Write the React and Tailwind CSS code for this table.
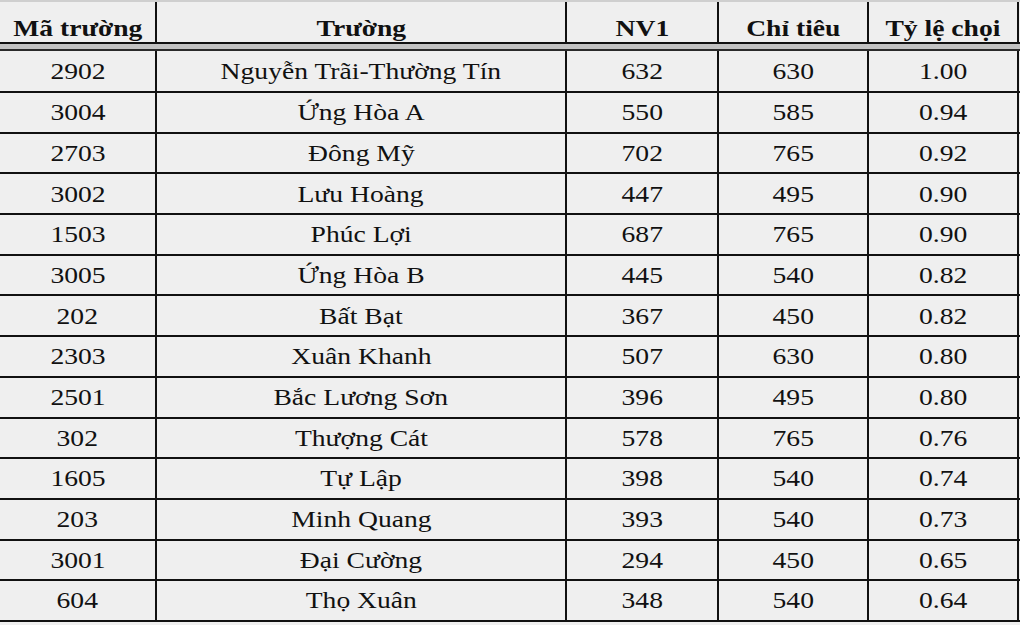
const ROWS = [
  ['2902', 'Nguyễn Trãi-Thường Tín', '632', '630', '1.00'],
  ['3004', 'Ứng Hòa A', '550', '585', '0.94'],
  ['2703', 'Đông Mỹ', '702', '765', '0.92'],
  ['3002', 'Lưu Hoàng', '447', '495', '0.90'],
  ['1503', 'Phúc Lợi', '687', '765', '0.90'],
  ['3005', 'Ứng Hòa B', '445', '540', '0.82'],
  ['202', 'Bất Bạt', '367', '450', '0.82'],
  ['2303', 'Xuân Khanh', '507', '630', '0.80'],
  ['2501', 'Bắc Lương Sơn', '396', '495', '0.80'],
  ['302', 'Thượng Cát', '578', '765', '0.76'],
  ['1605', 'Tự Lập', '398', '540', '0.74'],
  ['203', 'Minh Quang', '393', '540', '0.73'],
  ['3001', 'Đại Cường', '294', '450', '0.65'],
  ['604', 'Thọ Xuân', '348', '540', '0.64'],
];

const HEAD = ['Mã trường', 'Trường', 'NV1', 'Chỉ tiêu', 'Tỷ lệ chọi'];

// khớp với vị trí các đường kẻ dọc của ảnh gốc
const GRID = 'grid grid-cols-[157px_410px_152px_150px_150px_1fr]';

function Cell({ children, bold }) {
  return (
    <div
      className={
        'flex justify-center border-r-2 border-[#111] ' +
        (bold ? 'items-end pb-[1px] font-bold' : 'items-center pt-[1px]')
      }
    >
      <span className="inline-block scale-x-[1.2] whitespace-nowrap">{children}</span>
    </div>
  );
}

export default function App() {
  return (
    <div className="w-[1020px] h-[625px] overflow-hidden bg-[#efefef] text-[#111] font-['Liberation_Serif',serif] text-[23px] leading-[1.1]">
      <div className="border-t-2 border-[#cfcfcf]">
        <div className={GRID + ' h-[42px] border-b-2 border-[#111]'}>
          {HEAD.map(h => (
            <Cell key={h} bold>
              {h}
            </Cell>
          ))}
          <div />
        </div>
        <div className="h-[7px] bg-[#c3c3c3] border-b-2 border-[#2a2a2a]" />

        {ROWS.map((r, idx) => (
          <div
            key={r[0] + idx}
            className={GRID + ' border-b-2 border-[#111] ' + (idx === 0 ? 'h-[42px]' : 'h-[40.7px]')}
          >
            {r.map((v, i) => (
              <Cell key={i}>{v}</Cell>
            ))}
            <div />
          </div>
        ))}
      </div>
    </div>
  );
}
